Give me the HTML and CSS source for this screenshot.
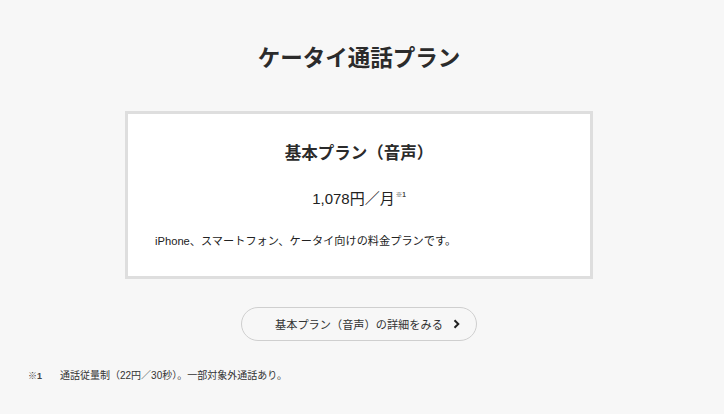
FILE: index.html
```html
<!DOCTYPE html>
<html lang="ja">
<head>
    <meta charset="utf-8">
    <title>ケータイ通話プラン</title>
    <meta name="viewport" content="width=device-width, initial-scale=1.0">
    <link rel="stylesheet" href="styles.css">
</head>
<body>
    <div class="plan-section">
        <h1 class="section-title">ケータイ通話プラン</h1>

        <div class="plan-card">
            <h2 class="plan-name">基本プラン（音声）</h2>
            <p class="plan-price">1,078円／月<sup class="note-ref">※1</sup></p>
            <p class="plan-desc">iPhone、スマートフォン、ケータイ向けの料金プランです。</p>
        </div>

        <div class="btn-wrap">
            <a href="#" class="btn-detail">
                <span>基本プラン（音声）の詳細をみる</span>
                <svg class="chevron" width="7" height="10" viewBox="0 0 7 10">
                    <path d="M1.5 1.2 L5.3 5 L1.5 8.8" fill="none" stroke="#222" stroke-width="2"/>
                </svg>
            </a>
        </div>
    </div>

    <div class="notes">
        <p class="note"><span class="note-mark">※1</span>通話従量制（22円／30秒）。一部対象外通話あり。</p>
    </div>
</body>
</html>
```

FILE: styles.css
```css
body {
    margin: 0;
    background: #f7f7f7;
    color: #333;
    font-family: 'Liberation Sans', 'Noto Sans CJK JP', sans-serif;
}
.plan-section {
    width: 468px;
    margin: 0 auto;
    padding: 42px 6px 0 0;
}
.section-title {
    margin: 0;
    font-size: 22.5px;
    line-height: 33px;
    font-weight: bold;
    text-align: center;
    color: #2b2b2b;
}
.plan-card {
    margin-top: 36px;
    background: #fff;
    border: 3px solid #dedede;
    padding: 27px 27px 26px;
}
.plan-name {
    margin: 0;
    font-size: 16.5px;
    line-height: 24px;
    font-weight: bold;
    text-align: center;
    color: #2b2b2b;
}
.plan-price {
    margin: 23px 0 0;
    font-size: 15px;
    line-height: 22px;
    text-align: center;
    color: #222;
}
.note-ref {
    font-size: 6.5px;
    vertical-align: 7px;
    line-height: 0;
    margin-left: 1px;
    color: #444;
    font-weight: bold;
}
.plan-desc {
    margin: 22px 0 0;
    font-size: 11.2px;
    line-height: 18px;
    color: #222;
}
.btn-wrap {
    margin-top: 28px;
    display: flex;
    justify-content: center;
}
.btn-detail {
    width: 236px;
    height: 34px;
    box-sizing: border-box;
    border: 1px solid #cfcfcf;
    border-radius: 17px;
    display: flex;
    align-items: center;
    justify-content: space-between;
    padding: 0 16px 0 33px;
    font-size: 11.2px;
    color: #333;
    text-decoration: none;
}
.notes {
    margin-top: 27px;
    padding-left: 28px;
}
.note {
    margin: 0;
    font-size: 10px;
    line-height: 15px;
    color: #333;
}
.note-mark {
    display: inline-block;
    width: 32px;
    font-size: 9px;
    font-weight: bold;
    color: #444;
}
```
